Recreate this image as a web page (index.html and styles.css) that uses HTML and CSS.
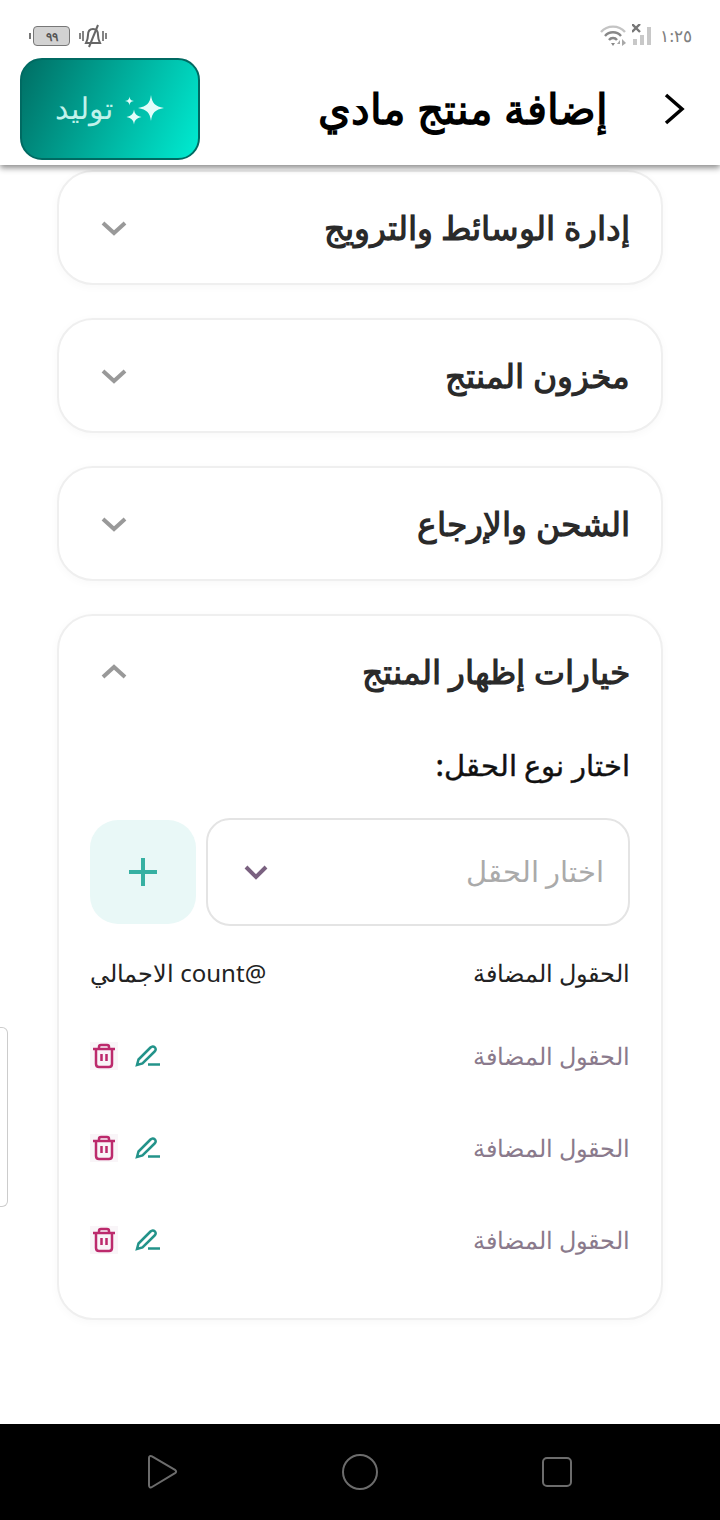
FILE: index.html
```html
<!DOCTYPE html>
<html lang="ar" dir="rtl">
  <head>
    <meta charset="UTF-8" />
    <meta name="viewport" content="width=device-width, initial-scale=1.0" />
    <title>إضافة منتج مادي</title>
    <link rel="stylesheet" href="styles.css">
  </head>
  <body>
    <div class="screen">
      <header class="top">
        <div class="status">
          <div class="status-right">
            <span class="clock">١:٢٥</span>
            <svg class="signal" width="24" height="24" viewBox="0 0 24 24">
              <rect x="1" y="15" width="4" height="6" fill="#c8c8c8" />
              <rect x="8" y="11" width="4" height="10" fill="#c8c8c8" />
              <rect x="15" y="3" width="4" height="18" fill="#c8c8c8" />
              <path d="M0 0l8 8M8 0l-8 8" stroke="#777" stroke-width="2.4" />
            </svg>
            <svg class="wifi" width="28" height="22" viewBox="0 0 28 22">
              <path d="M1 7a16 16 0 0 1 24 0" fill="none" stroke="#c4c4c4" stroke-width="2.4" />
              <path d="M5 11a10.500 10.500 0 0 1 16 0" fill="none" stroke="#888" stroke-width="2.4" />
              <path d="M9 15a5 5 0 0 1 8 0" fill="none" stroke="#888" stroke-width="2.4" />
              <path d="M11 18h4l-2 3z" fill="#888" />
              <path d="M20 15l-3 4h3zM22 14l4 4-4 3z" fill="#a8a8a8" />
            </svg>
          </div>
          <div class="status-left">
            <svg class="bell" width="30" height="24" viewBox="0 0 30 24">
              <path d="M15 5c-4 0-5 3-5 6 0 4-1 6-2 8h14c-1-2-2-4-2-8 0-3-1-6-5-6z" fill="none" stroke="#666" stroke-width="2" />
              <path d="M20 1L11 23" stroke="#666" stroke-width="2" />
              <path d="M5 7v10M2 9v6M25 7v10M28 9v6" stroke="#666" stroke-width="1.600" />
            </svg>
            <div class="battery"><span>٩٩</span></div>
          </div>
        </div>
        <div class="bar">
          <div class="bar-title">
            <svg class="back" width="24" height="34" viewBox="0 0 24 34">
              <path d="M4 3l16 14L4 31" fill="none" stroke="#000" stroke-width="3.500" />
            </svg>
            <h1>إضافة منتج مادي</h1>
          </div>
          <button class="generate">
            <svg width="40" height="32" viewBox="0 0 40 32">
              <path d="M26 2c1 8 4 11.500 13 13-9 1.500-12 5-13 13-1-8-4-11.500-13-13 9-1.500 12-5 13-13z" fill="#e2fdfa" />
              <path d="M9 16.500c.6 4.500 2.500 6.500 7.500 7.500-5 1-6.900 3-7.500 7.500-.6-4.500-2.500-6.500-7.500-7.500 5-1 6.900-3 7.500-7.500z" fill="#e2fdfa" />
              <path d="M4.500 3.500c.4 3 1.400 4 4.500 4.500-3.100.5-4.100 1.500-4.500 4.500C4.100 9.500 3.100 8.500 0 8c3.100-.5 4.100-1.500 4.500-4.500z" fill="#e2fdfa" />
            </svg>
            <span>توليد</span>
          </button>
        </div>
      </header>

      <main class="content">
        <section class="card">
          <div class="card-head">
            <h2>إدارة الوسائط والترويج</h2>
            <svg class="chev" width="26" height="16" viewBox="0 0 26 16"><path d="M2 3l11 10L24 3" /></svg>
          </div>
        </section>
        <section class="card">
          <div class="card-head">
            <h2>مخزون المنتج</h2>
            <svg class="chev" width="26" height="16" viewBox="0 0 26 16"><path d="M2 3l11 10L24 3" /></svg>
          </div>
        </section>
        <section class="card">
          <div class="card-head">
            <h2>الشحن والإرجاع</h2>
            <svg class="chev" width="26" height="16" viewBox="0 0 26 16"><path d="M2 3l11 10L24 3" /></svg>
          </div>
        </section>
        <section class="card">
          <div class="card-head">
            <h2>خيارات إظهار المنتج</h2>
            <svg class="chev" width="26" height="16" viewBox="0 0 26 16"><path d="M2 13L13 3l11 10" /></svg>
          </div>
          <div class="card-body">
            <div class="field-label">اختار نوع الحقل:</div>
            <div class="picker">
              <div class="select">
                <span>اختار الحقل</span>
                <svg width="26" height="16" viewBox="0 0 26 16"><path d="M3 3l10 10L23 3" /></svg>
              </div>
              <button class="add">
                <svg width="30" height="30" viewBox="0 0 30 30"><path d="M15 1v28M1 15h28" /></svg>
              </button>
            </div>
            <div class="table-head">
              <span>الحقول المضافة</span>
              <span>@count الاجمالي</span>
            </div>
            <div class="row">
              <span>الحقول المضافة</span>
              <div class="actions">
                <svg class="edit" width="26" height="26" viewBox="0 0 26 26"><path d="M3 22l1.500-5.500L16.500 4.500c1.400-1.400 3-1.500 4.300-.2s1.200 2.900-.2 4.200L8.500 20.500z" /><path d="M14 21.500h12" /></svg>
                <svg class="trash" width="28" height="28" viewBox="0 0 28 28"><rect width="28" height="28" fill="#f9f5f8" stroke="none" /><path d="M3 7h22M9 7V5c0-1.500 1-2 2-2h6c1 0 2 .5 2 2v2M6 7v15c0 2 1 3 3 3h10c2 0 3-1 3-3V7M11.500 12v7M16.500 12v7" /></svg>
              </div>
            </div>
            <div class="row">
              <span>الحقول المضافة</span>
              <div class="actions">
                <svg class="edit" width="26" height="26" viewBox="0 0 26 26"><path d="M3 22l1.500-5.500L16.500 4.500c1.400-1.400 3-1.500 4.300-.2s1.200 2.900-.2 4.200L8.500 20.500z" /><path d="M14 21.500h12" /></svg>
                <svg class="trash" width="28" height="28" viewBox="0 0 28 28"><rect width="28" height="28" fill="#f9f5f8" stroke="none" /><path d="M3 7h22M9 7V5c0-1.500 1-2 2-2h6c1 0 2 .5 2 2v2M6 7v15c0 2 1 3 3 3h10c2 0 3-1 3-3V7M11.500 12v7M16.500 12v7" /></svg>
              </div>
            </div>
            <div class="row">
              <span>الحقول المضافة</span>
              <div class="actions">
                <svg class="edit" width="26" height="26" viewBox="0 0 26 26"><path d="M3 22l1.500-5.500L16.500 4.500c1.400-1.400 3-1.500 4.300-.2s1.200 2.900-.2 4.200L8.500 20.500z" /><path d="M14 21.500h12" /></svg>
                <svg class="trash" width="28" height="28" viewBox="0 0 28 28"><rect width="28" height="28" fill="#f9f5f8" stroke="none" /><path d="M3 7h22M9 7V5c0-1.500 1-2 2-2h6c1 0 2 .5 2 2v2M6 7v15c0 2 1 3 3 3h10c2 0 3-1 3-3V7M11.500 12v7M16.500 12v7" /></svg>
              </div>
            </div>
          </div>
        </section>
      </main>

      <div class="side-tab"></div>

      <nav class="navbar">
        <svg width="32" height="36" viewBox="0 0 32 36"><path d="M3 4c0-2 1.500-2.500 3-1.700l23 13.500c1.500 1 1.500 2.400 0 3.400L6 33c-1.500 1-3 .3-3-1.700z" /></svg>
        <svg width="36" height="36" viewBox="0 0 36 36"><circle cx="18" cy="18" r="17" /></svg>
        <svg width="30" height="30" viewBox="0 0 30 30"><rect x="1" y="1" width="28" height="28" rx="4" /></svg>
      </nav>
    </div>
  </body>
</html>
```

FILE: styles.css
```css
/* styles.css */
* {
  box-sizing: border-box;
}

html,
body {
  margin: 0;
  padding: 0;
}

body {
  font-family: "Noto Sans", sans-serif;
  background-color: #fff;
}

.screen {
  position: relative;
  width: 720px;
  height: 1520px;
  display: flex;
  flex-direction: column;
  overflow: hidden;
}

/* header */
.top {
  height: 165px;
  flex: none;
  background-color: #fff;
  box-shadow: 0 3px 6px rgba(0, 0, 0, 0.45);
  position: relative;
  z-index: 2;
}

.status {
  height: 58px;
  padding: 24px 28px 0 33px;
  display: flex;
  justify-content: space-between;
  align-items: flex-start;
}

.status-right,
.status-left {
  display: flex;
  align-items: center;
  gap: 4px;
}

.clock {
  color: #808080;
  font-size: 17px;
  line-height: 24px;
  align-self: flex-start;
}

.battery {
  width: 37px;
  height: 20px;
  border: 1px solid #777;
  border-radius: 4px;
  background-color: #d2d2d2;
  margin-right: 4px;
  position: relative;
  display: flex;
  align-items: center;
  justify-content: center;
  font-size: 12px;
  font-weight: 700;
  color: #555;
}

.battery::after {
  content: "";
  position: absolute;
  left: -5px;
  top: 6px;
  width: 2px;
  height: 6px;
  background-color: #777;
}

.bar {
  height: 102px;
  padding: 0 34px 0 20px;
  display: flex;
  justify-content: space-between;
  align-items: center;
}

.bar-title {
  display: flex;
  align-items: center;
  gap: 54px;
}

.bar-title h1 {
  margin: 0 0 4px 0;
  font-size: 42px;
  font-weight: 700;
  color: #000;
}

.generate {
  width: 180px;
  height: 102px;
  border: 2px solid #006a62;
  border-radius: 22px;
  background: linear-gradient(115deg, #006e64, #00ecd2);
  display: flex;
  flex-direction: row;
  align-items: center;
  justify-content: center;
  gap: 12px;
  color: #c0f2eb;
  font-family: inherit;
  font-size: 30px;
  padding: 0;
}

.generate span {
  margin-bottom: 4px;
}

/* cards */
.content {
  flex: 1;
  padding: 5px 57px 0 57px;
  display: flex;
  flex-direction: column;
  gap: 33px;
}

.card {
  background-color: #fff;
  border: 2px solid #efefef;
  border-radius: 36px;
  box-shadow: 0 2px 10px rgba(0, 0, 0, 0.03);
}

.card-head {
  height: 111px;
  padding: 0 31px 0 42px;
  display: flex;
  justify-content: space-between;
  align-items: center;
}

.card-head h2 {
  margin: 0;
  font-size: 33px;
  font-weight: 700;
  color: #2a2a2a;
}

.chev path {
  fill: none;
  stroke: #999;
  stroke-width: 4;
}

.card-body {
  padding: 18px 31px 32px 31px;
}

.field-label {
  font-size: 29.300px;
  font-weight: 500;
  -webkit-text-stroke: 0.4px #111;
  color: #111;
  line-height: 40px;
}

.picker {
  display: flex;
  align-items: center;
  gap: 10px;
  margin-top: 33px;
}

.select {
  flex: 1;
  height: 108px;
  border: 2px solid #e4e4e4;
  border-radius: 24px;
  padding: 0 24px 0 35px;
  display: flex;
  justify-content: space-between;
  align-items: center;
  font-size: 28.500px;
  color: #aaa;
}

.select span {
  margin-bottom: 3px;
}

.select path {
  fill: none;
  stroke: #7a6180;
  stroke-width: 4;
}

.add {
  width: 106px;
  height: 104px;
  border: none;
  border-radius: 28px;
  background-color: #e9f8f7;
  display: flex;
  align-items: center;
  justify-content: center;
  padding: 0;
}

.add path {
  fill: none;
  stroke: #36b0a2;
  stroke-width: 4;
}

.table-head {
  display: flex;
  justify-content: space-between;
  align-items: center;
  height: 32px;
  margin-top: 31px;
  font-size: 24px;
  color: #222;
}

.table-head span,
.row > span {
  margin-bottom: 2px;
}

.row {
  display: flex;
  justify-content: space-between;
  align-items: center;
  height: 92px;
  font-size: 24px;
  color: #8a7a8c;
}

.table-head + .row {
  margin-top: 21px;
}

.actions {
  display: flex;
  align-items: center;
  gap: 16px;
}

.edit path {
  fill: none;
  stroke: #23938a;
  stroke-width: 2.500;
}

.trash path {
  fill: none;
  stroke: #bc2a6c;
  stroke-width: 2.500;
}

/* floats over the content at the page edge */
.side-tab {
  position: absolute;
  left: 0;
  top: 1027px;
  width: 8px;
  height: 180px;
  border: 1px solid #ccc;
  border-left: none;
  border-radius: 0 6px 6px 0;
  background-color: #fff;
}

.navbar {
  height: 96px;
  flex: none;
  background-color: #000;
  direction: ltr;
  display: flex;
  justify-content: center;
  align-items: center;
  gap: 164px;
  padding-right: 2px;
}

.navbar svg {
  fill: none;
  stroke: #6c6c6c;
  stroke-width: 2;
}
```
